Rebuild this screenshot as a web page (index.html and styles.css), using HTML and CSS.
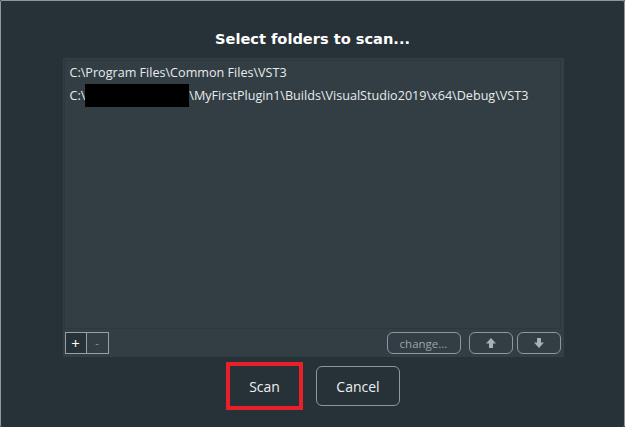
FILE: index.html
```html
<!DOCTYPE html>
<html lang="en">
<head>
    <meta charset="UTF-8">
    <title>Select folders to scan</title>
    <link rel="stylesheet" href="styles.css">
</head>
<body>
    <div class="window">
        <h1 class="title">Select folders to scan...</h1>

        <!-- Folder list -->
        <div class="panel">
            <ul class="folder-list">
                <li>C:\Program Files\Common Files\VST3</li>
                <li>C:\<span class="redacted"></span>\MyFirstPlugin1\Builds\VisualStudio2019\x64\Debug\VST3</li>
            </ul>
            <div class="toolbar">
                <div class="pm">
                    <button class="sq plus">+</button>
                    <button class="sq minus">-</button>
                </div>
                <div class="tools-right">
                    <button class="small change">change...</button>
                    <button class="small arrow">
                        <svg width="12" height="12" viewBox="0 0 12 12"><path d="M6 1 L11 6.5 L8 6.5 L8 11 L4 11 L4 6.5 L1 6.5 Z" fill="#a9b1b4"/></svg>
                    </button>
                    <button class="small arrow">
                        <svg width="12" height="12" viewBox="0 0 12 12"><path d="M6 11 L11 5.5 L8 5.5 L8 1 L4 1 L4 5.5 L1 5.5 Z" fill="#a9b1b4"/></svg>
                    </button>
                </div>
            </div>
        </div>

        <!-- Dialog buttons -->
        <div class="actions">
            <div class="highlight">
                <button class="big scan">Scan</button>
            </div>
            <button class="big">Cancel</button>
        </div>
    </div>
</body>
</html>
```
FILE: styles.css
```css
/* Dialog styling */
body {
    margin: 0;
    padding: 0;
    background-color: #273238;
    font-family: "Open Sans", sans-serif;
    color: #e8ebec;
}
.window {
    width: 625px;
    height: 427px;
    box-sizing: border-box;
    border: 1px solid #8e979b;
    border-bottom: none;
    border-radius: 2px;
    background-color: #273238;
    display: flex;
    flex-direction: column;
    align-items: center;
}
.title {
    margin: 28px 0 0 0;
    font-family: "DejaVu Sans", sans-serif;
    font-size: 14.6px;
    font-weight: bold;
    line-height: 20px;
    color: #ffffff;
}
.panel {
    margin-top: 9px;
    width: 501px;
    height: 299px;
    box-sizing: border-box;
    background-color: #323e44;
    padding: 2px 3px 3px 1px;
    display: flex;
    flex-direction: column;
    margin-left: 1px;
}
.folder-list {
    list-style: none;
    margin: 0;
    padding: 0 0 0 5px;
    flex: 1;
    border: 1px solid #2d383e;
    font-size: 12.6px;
}
.folder-list li {
    height: 23px;
    line-height: 23px;
    white-space: nowrap;
}
.redacted {
    display: inline-block;
    width: 104px;
    height: 23px;
    background-color: #000000;
    vertical-align: top;
}
.toolbar {
    display: flex;
    justify-content: space-between;
    align-items: center;
    margin-top: 3px;
}
.pm {
    display: flex;
    margin-left: 1px;
}
button {
    font-family: "Open Sans", sans-serif;
    cursor: pointer;
    padding: 0;
}
.sq {
    width: 22px;
    height: 22px;
    box-sizing: border-box;
    border: 1px solid #98a0a3;
    background-color: #273238;
    color: #ffffff;
    font-size: 15px;
    line-height: 18px;
}
.minus {
    border-left: none;
    background-color: #323e44;
    color: #8e979b;
    font-size: 11px;
}
.tools-right {
    display: flex;
    gap: 4px;
}
.small {
    height: 22px;
    box-sizing: border-box;
    border: 1px solid #8e979b;
    border-radius: 6px;
    background-color: #323e44;
    color: #9ca4a7;
    font-size: 11.5px;
    display: flex;
    align-items: center;
    justify-content: center;
}
.change {
    width: 74px;
    margin-right: 4px;
}
.arrow {
    width: 44px;
}
.actions {
    display: flex;
    align-items: center;
    gap: 13px;
    margin-top: 5px;
    margin-left: 1px;
}
.highlight {
    border: 4px solid #e8202a;
    width: 77px;
    height: 48px;
    box-sizing: border-box;
    overflow: hidden;
    display: flex;
    align-items: center;
    justify-content: center;
}
.big {
    width: 84px;
    height: 40px;
    box-sizing: border-box;
    border: 1px solid #8e979b;
    border-radius: 6px;
    background-color: #273238;
    color: #eef0f1;
    font-size: 14px;
}
.scan {
    flex-shrink: 0;
    border-color: transparent;
}
```
